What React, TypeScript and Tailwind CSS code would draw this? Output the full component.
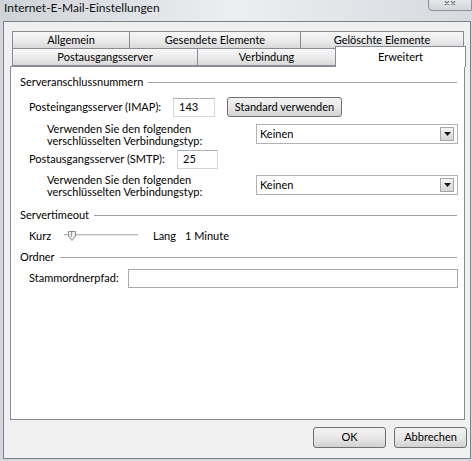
import React from 'react';

const tabBase =
  'flex items-center justify-center border border-[#898c95] bg-gradient-to-b from-[#f7f7f7] via-[#ececec] to-[#d9d9d9] text-black';

const Tab: React.FC<{ label: string; w: string; first?: boolean }> = ({ label, w, first }) => (
  <div className={`${tabBase} h-[18px] ${w} ${first ? '' : '-ml-px'}`}>{label}</div>
);

const GroupHeading: React.FC<{ label: string; mt: string }> = ({ label, mt }) => (
  <div className={`flex items-center h-[14px] ${mt}`}>
    <span>{label}</span>
    <div className="flex-1 ml-[5px] mr-[1px] border-t border-[#a0a0a0]" />
  </div>
);

const TextBox: React.FC<{ value?: string; w: string }> = ({ value, w }) => (
  <div
    className={`h-[19px] ${w} flex items-center pl-[5px] bg-white border border-[#d5d7db] border-t-[#abadb3]`}
  >
    {value}
  </div>
);

const ComboBox: React.FC<{ value: string }> = ({ value }) => (
  <div className="h-[20px] w-[202px] flex items-center justify-between bg-white border border-[#b0b2b6] pl-[3px] pr-[3px]">
    <span>{value}</span>
    <div className="w-[14px] h-[14px] flex items-center justify-center border border-[#a4a6aa] bg-gradient-to-b from-[#f4f4f4] to-[#d6d6d6]">
      <svg width="7" height="4" viewBox="0 0 7 4">
        <path d="M0 0 H7 L3.5 4 Z" fill="#1a1a1a" />
      </svg>
    </div>
  </div>
);

const Button: React.FC<{ label: string; w: string; h?: string }> = ({ label, w, h = 'h-[21px]' }) => (
  <div
    className={`${w} ${h} flex items-center justify-center rounded-[3px] border border-[#707070] bg-gradient-to-b from-[#f2f2f2] via-[#e8e8e8] to-[#d2d2d2] text-black`}
  >
    {label}
  </div>
);

const EncryptionRow: React.FC<{ mt: string }> = ({ mt }) => (
  <div className={`flex h-[24px] ${mt}`}>
    <div className="w-[236px] pl-[27px] leading-[12px]">
      <div>Verwenden Sie den folgenden</div>
      <div>verschlüsselten Verbindungstyp:</div>
    </div>
    <div className="mt-[1px]">
      <ComboBox value="Keinen" />
    </div>
  </div>
);

export default function App() {
  return (
    <div className="w-[472px] h-[461px] flex flex-col overflow-hidden bg-[#d4d8dd] font-['Lato',sans-serif] text-[11px] text-black">
      {/* title bar */}
      <div className="h-[21px] shrink-0 flex items-start justify-between bg-gradient-to-r from-[#cfd3d8] via-[#eceef1] to-[#d6d9de]">
        <span className="pl-[4px] text-[12px] leading-[15px] text-[#111]">Internet-E-Mail-Einstellungen</span>
        <div className="w-[44px] h-[12px] -mt-px flex items-start justify-center rounded-bl-[4px] border border-[#8d9198] bg-gradient-to-b from-[#e4e6e9] to-[#d2d5d9]">
          <svg width="12" height="8" viewBox="0 0 12 8" className="mt-[1px]">
            <path d="M1 0 L5 4 M7 0 L11 4 M11 0 L7 4 M5 0 L1 4" stroke="#6a6e74" strokeWidth="1.2" fill="none" />
            <path d="M2 0 L10 6 M10 0 L2 6" stroke="#ffffff" strokeWidth="0.6" fill="none" opacity="0.6" />
          </svg>
        </div>
      </div>

      {/* client area */}
      <div className="flex-1 ml-[3px] mr-[1px] mb-[2px] flex flex-col bg-[#f0f0f0] border border-[#7d8187] pt-[9px] pl-[6px]">
        {/* tab rows */}
        <div className="ml-[2px] flex">
          <Tab label="Allgemein" w="w-[118px]" first />
          <Tab label="Gesendete Elemente" w="w-[172px]" />
          <Tab label="Gelöschte Elemente" w="w-[164px]" />
        </div>
        <div className="ml-[2px] -mt-px flex items-end h-[18px] relative z-10">
          <Tab label="Postausgangsserver" w="w-[186px]" first />
          <Tab label="Verbindung" w="w-[139px]" />
          <div className="-ml-px -mb-px w-[131px] h-[21px] flex justify-center pt-[2px] bg-white border border-b-0 border-[#898c95]">
            Erweitert
          </div>
        </div>

        {/* tab page */}
        <div className="w-[455px] h-[354px] bg-white border border-[#898c95] pl-[9px] pr-[6px] flex flex-col">
          <GroupHeading label="Serveranschlussnummern" mt="mt-[8px]" />

          <div className="flex items-center h-[20px] mt-[8px]">
            <span className="w-[153px] pl-[9px]">Posteingangsserver (IMAP):</span>
            <TextBox value="143" w="w-[42px]" />
            <div className="ml-[12px]">
              <Button label="Standard verwenden" w="w-[115px]" h="h-[20px]" />
            </div>
          </div>

          <EncryptionRow mt="mt-[6px]" />

          <div className="flex items-center h-[19px] mt-[3px]">
            <span className="w-[157px] pl-[9px]">Postausgangsserver (SMTP):</span>
            <TextBox value="25" w="w-[41px]" />
          </div>

          <EncryptionRow mt="mt-[5px]" />

          <GroupHeading label="Servertimeout" mt="mt-[10px]" />

          <div className="flex items-center h-[14px] mt-[7px] pl-[9px]">
            <span className="w-[35px]">Kurz</span>
            <svg width="74" height="12" viewBox="0 0 74 12">
              <rect x="0" y="4" width="74" height="1" fill="#b9b9b9" />
              <rect x="0" y="5" width="74" height="1" fill="#e6e6e6" />
              <path d="M4.5 1.5 H11.5 V6 L8 10.5 L4.5 6 Z" fill="#eeeeee" stroke="#8c8c8c" />
              <rect x="7" y="2" width="1" height="5" fill="#9a9a9a" />
            </svg>
            <span className="ml-[15px]">Lang</span>
            <span className="ml-[9px]">1 Minute</span>
          </div>

          <GroupHeading label="Ordner" mt="mt-[7px]" />

          <div className="flex items-center h-[19px] mt-[5px]">
            <span className="w-[108px] pl-[9px]">Stammordnerpfad:</span>
            <div className="flex-1 h-[19px] bg-white border border-[#a9a9a9]" />
          </div>
        </div>

        {/* dialog buttons */}
        <div className="flex justify-end gap-[8px] mt-[7px] pr-[3px]">
          <Button label="OK" w="w-[73px]" />
          <Button label="Abbrechen" w="w-[73px]" />
        </div>
      </div>
    </div>
  );
}
